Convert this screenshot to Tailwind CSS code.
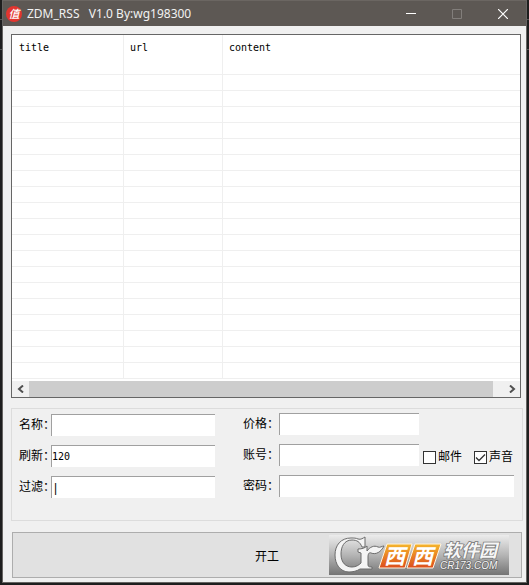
<!DOCTYPE html>
<html lang="zh-CN">
<head>
<meta charset="utf-8">
<title>ZDM_RSS V1.0</title>
<script src="https://cdn.jsdelivr.net/npm/@tailwindcss/browser@4"></script>
</head>
<body class="min-h-screen flex flex-col px-[2px] pb-[2px] bg-[#1e1e1e] bg-[linear-gradient(to_bottom,#1e1e1e_19px,#555_19px,#555_20px,#1e1e1e_20px,#1e1e1e_49px,#555_49px,#555_50px,#1e1e1e_50px)] font-['Liberation_Sans','Noto_Sans_CJK_SC',sans-serif] text-xs text-black">
<div class="flex-1 flex flex-col border border-t-0 border-[#666462] bg-[#f0f0f0]">
  <header class="h-[26px] flex items-center bg-[#5d5854] border-t border-[#6b6662] pl-[3px] text-white">
    <svg class="w-4 h-4 mr-[5px] shrink-0 overflow-visible" viewBox="0 0 16 16" aria-hidden="true">
      <circle cx="8" cy="8" r="8" fill="#e2352f"/>
      <text x="8" y="12" text-anchor="middle" font-size="11" font-weight="500" font-style="italic" fill="#fff" font-family="Noto Sans CJK SC, sans-serif">值</text>
    </svg>
    <h1 class="flex-1 whitespace-pre font-['Noto_Sans',sans-serif] text-xs leading-4 text-[#f2f2f2]">ZDM_RSS   V1.0 By:wg198300</h1>
    <button type="button" aria-label="最小化" class="w-[46px] h-full flex items-center justify-center"><svg class="w-[10px] h-[10px]" viewBox="0 0 10 10"><path d="M0 4.500H10" stroke="#fff"/></svg></button>
    <button type="button" aria-label="最大化" disabled class="w-[46px] h-full flex items-center justify-center"><svg class="w-[10px] h-[10px]" viewBox="0 0 10 10"><path d="M.5.5H9.500V9.500H.5Z" stroke="#827e7b" fill="none"/></svg></button>
    <button type="button" aria-label="关闭" class="w-[46px] h-full flex items-center justify-center"><svg class="w-[10px] h-[10px]" viewBox="0 0 10 10"><path d="M0 0L10 10M10 0L0 10" stroke="#fff" stroke-width="1.200"/></svg></button>
  </header>

  <main class="flex-1 flex flex-col pl-2 pr-[3px] pt-2 pb-1">
    <section class="mr-[2px] border border-[#666] bg-white">
      <table class="w-full table-fixed border-separate border-spacing-0 text-[10px] leading-3 font-['DejaVu_Sans_Mono',monospace] [&_td]:h-4 [&_td]:p-0 [&_td]:border-b [&_td]:border-r [&_td]:border-[#efefef] [&_td:last-child]:border-r-0">
        <thead>
          <tr class="h-10 text-left align-top">
            <th class="w-[112px] font-normal pt-[7px] pl-[7px] border-b border-r border-[#efefef]">title</th>
            <th class="w-[99px] font-normal pt-[7px] pl-[6px] border-b border-r border-[#efefef]">url</th>
            <th class="font-normal pt-[7px] pl-[6px] border-b border-[#efefef]">content</th>
          </tr>
        </thead>
        <tbody>
          <tr><td></td><td></td><td></td></tr>
          <tr><td></td><td></td><td></td></tr>
          <tr><td></td><td></td><td></td></tr>
          <tr><td></td><td></td><td></td></tr>
          <tr><td></td><td></td><td></td></tr>
          <tr><td></td><td></td><td></td></tr>
          <tr><td></td><td></td><td></td></tr>
          <tr><td></td><td></td><td></td></tr>
          <tr><td></td><td></td><td></td></tr>
          <tr><td></td><td></td><td></td></tr>
          <tr><td></td><td></td><td></td></tr>
          <tr><td></td><td></td><td></td></tr>
          <tr><td></td><td></td><td></td></tr>
          <tr><td></td><td></td><td></td></tr>
          <tr><td></td><td></td><td></td></tr>
          <tr><td></td><td></td><td></td></tr>
          <tr><td></td><td></td><td></td></tr>
          <tr><td></td><td></td><td></td></tr>
          <tr><td></td><td></td><td></td></tr>
        </tbody>
      </table>
      <div class="h-4 mt-[2px] flex bg-[#f0f0f0]">
        <button type="button" aria-label="向左滚动" class="w-[17px] flex items-center justify-center"><svg class="w-2 h-2" viewBox="0 0 8 8"><path d="M6 .5L2 4L6 7.500" fill="none" stroke="#505050" stroke-width="2"/></svg></button>
        <div class="flex-1 bg-[#cdcdcd]"></div>
        <div class="w-[10px]"></div>
        <button type="button" aria-label="向右滚动" class="w-[17px] flex items-center justify-center"><svg class="w-2 h-2" viewBox="0 0 8 8"><path d="M2 .5L6 4L2 7.500" fill="none" stroke="#505050" stroke-width="2"/></svg></button>
      </div>
    </section>

    <form class="mt-[10px] border border-[#dcdcdc] flex pl-[7px] pr-2 pt-1 pb-[22px] [&_label]:whitespace-nowrap">
      <div class="flex flex-col gap-[9px] pt-[1px] w-[196px]">
        <div class="flex items-center"><label for="name" class="w-8">名称：</label><input id="name" class="flex-1 min-w-0 h-[22px] bg-white border-t border-l border-[#a0a0a0] outline-none"></div>
        <div class="flex items-center"><label for="refresh" class="w-8">刷新：</label><input id="refresh" value="120" class="flex-1 min-w-0 h-[22px] bg-white border-t border-l border-[#a0a0a0] outline-none text-[10px] font-['DejaVu_Sans_Mono',monospace]"></div>
        <div class="flex items-center"><label for="filter" class="w-8">过滤：</label><input id="filter" value="|" class="flex-1 min-w-0 h-[22px] px-[2px] bg-white border-t border-l border-[#a0a0a0] outline-none"></div>
      </div>
      <div class="flex-1 flex flex-col gap-[9px] ml-7">
        <div class="flex items-center"><label for="price" class="w-9">价格：</label><input id="price" class="w-[140px] h-[22px] bg-white border-t border-l border-[#a0a0a0] outline-none"></div>
        <div class="flex items-center"><label for="account" class="w-9">账号：</label><input id="account" class="w-[140px] h-[22px] bg-white border-t border-l border-[#a0a0a0] outline-none">
          <label class="flex items-center gap-[2px] ml-1 pt-1"><input type="checkbox" class="appearance-none w-[13px] h-[13px] border border-[#333] bg-white">邮件</label>
          <label class="flex items-center gap-[2px] ml-3 pt-1"><input type="checkbox" checked class="peer appearance-none w-[13px] h-[13px] border border-[#333] bg-white"><svg class="w-[13px] h-[13px] -ml-[15px] pointer-events-none invisible peer-checked:visible" viewBox="0 0 13 13"><path d="M2 6.500L5 9.500L11 3.500" fill="none" stroke="#333" stroke-width="1.300"/></svg>声音</label>
        </div>
        <div class="flex items-center"><label for="password" class="w-9">密码：</label><input id="password" class="flex-1 min-w-0 h-[22px] bg-white border-t border-l border-[#a0a0a0] outline-none"></div>
      </div>
    </form>

    <div class="relative mt-[11px] mx-[1px] flex">
      <button type="button" class="flex-1 h-[46px] pt-1 bg-[#e1e1e1] border border-[#adadad]">开工</button>
      <svg class="absolute right-[13px] top-[3px] w-[180px] h-10 pointer-events-none" viewBox="0 0 180 40" role="img" aria-label="西西软件园 CR173.COM">
        <defs>
          <linearGradient id="bg" x2="0" y2="1"><stop stop-color="#ececec"/><stop offset=".5" stop-color="#b5b5b5"/><stop offset="1" stop-color="#747474"/></linearGradient>
          <linearGradient id="or" x2="0" y2="1"><stop stop-color="#f5b62c"/><stop offset="1" stop-color="#dc4c1c"/></linearGradient>
        </defs>
        <path d="M0 0H180V40H0Z" fill="url(#bg)"/>
        <path d="M29 4C32 5 34 3 36 2V12H33C31 7 28 5 23 5C15 5 12 12 12 19C12 28 17 32 23 32C27 32 30 30 32 28V18L29 17V14C33 14 36 13 38 11V16C41 12 45 10 49 12C51 13 53 11 55 11C52 17 47 20 42 18C40 17 39 19 39 22V30C39 32 41 32 43 32V34H31C28 36 24 37 20 37C11 37 6 29 6 20C6 10 12 3 22 3C25 3 27 3 29 4Z" fill="#f4f4f4" stroke="#6b6b6b" stroke-width="1"/>
        <path d="M58 9H83L76 33H50Z M86 9H112L104 33H78Z" fill="url(#or)" stroke="#fff3df" stroke-width="1"/>
        <g font-size="21" font-weight="700" font-style="italic" fill="#fff" font-family="Noto Sans CJK SC, sans-serif"><text x="55" y="29">西</text><text x="83" y="29">西</text></g>
        <text x="114" y="22" font-size="18" font-weight="700" font-style="italic" fill="#f6f6f6" stroke="#777" stroke-width="1.500" paint-order="stroke" font-family="Noto Sans CJK SC, sans-serif">软件园</text>
        <text x="111" y="34" font-size="10" font-weight="400" font-style="italic" fill="#f6f6f6" stroke="#666" stroke-width="1.500" paint-order="stroke" font-family="Liberation Sans, sans-serif">CR173.COM</text>
      </svg>
    </div>
  </main>
</div>
</body>
</html>
